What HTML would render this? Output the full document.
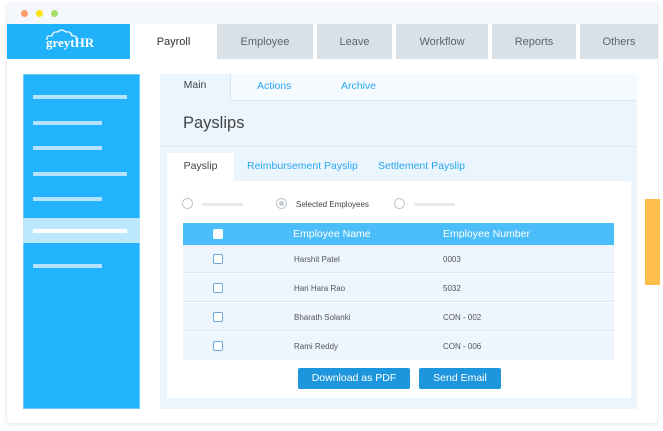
<!DOCTYPE html>
<html><head><style>
*{margin:0;padding:0;box-sizing:border-box}
body{width:663px;height:431px;background:#fff;position:relative;overflow:hidden;font-family:"Liberation Sans",sans-serif}
.a{position:absolute}
.win{left:7px;top:3px;width:651px;height:420px;background:#fff;border-radius:4px;box-shadow:0 1px 4px rgba(0,0,0,.12)}
.tb{left:7px;top:3px;width:651px;height:21px;background:#f4f8fd;border-radius:4px 4px 0 0}
.dot{width:7px;height:7px;border-radius:50%;top:10px}
.tab{top:24px;height:35px;background:#d9e1e7;color:#59646c;font-size:11px;line-height:37px;text-align:center}
.sl{height:4px;background:#b5e2fd;left:33px}
.row{left:183px;width:431px;height:28px;background:#edf6fe;border-bottom:1px solid #d8e6f1;font-size:8px;color:#555}
.row span{top:10px}
.cb{width:10px;height:10px;border:1.3px solid #6fa8d8;border-radius:2px;background:#fff;left:30px;top:9px}
.btn{top:368px;height:21px;background:#1e96dd;color:#fff;font-size:10.5px;line-height:21px;text-align:center;border-radius:2px}
.rad{width:11px;height:11px;border:1px solid #bcc6cf;border-radius:50%;background:#fff;top:198px}
</style></head><body>
<div class="a win"></div>
<div class="a tb"></div>
<div class="a dot" style="left:21px;background:#fd9a6a"></div>
<div class="a dot" style="left:36px;background:#fde216"></div>
<div class="a dot" style="left:51px;background:#a6df6a"></div>
<div class="a" style="left:7px;top:24px;width:123px;height:35px;background:#1fb2fb"></div>
<div class="a" style="left:46px;top:35px;color:#fff;font-family:'Liberation Serif',serif;font-weight:bold;font-size:13px">greytHR</div>
<svg class="a" style="left:44px;top:29px" width="40" height="12"><path d="M3 11 Q2 6 8 7 Q9 2 14 3 Q17 -1 22 3 Q27 2 28 7 Q33 6 33 11" fill="none" stroke="#fff" stroke-width="1.2"/></svg>
<div class="a tab" style="left:130px;width:87px;background:#fff;color:#333">Payroll</div>
<div class="a tab" style="left:217px;width:96px">Employee</div>
<div class="a tab" style="left:317px;width:75px">Leave</div>
<div class="a tab" style="left:396px;width:92px">Workflow</div>
<div class="a tab" style="left:492px;width:84px">Reports</div>
<div class="a tab" style="left:580px;width:78px">Others</div>
<div class="a" style="left:23px;top:74px;width:117px;height:335px;background:#22b3fc;border:1px solid #6dcdfd"></div>
<div class="a sl" style="top:95px;width:94px"></div>
<div class="a sl" style="top:121px;width:69px"></div>
<div class="a sl" style="top:146px;width:69px"></div>
<div class="a sl" style="top:172px;width:94px"></div>
<div class="a sl" style="top:197px;width:69px"></div>
<div class="a" style="left:23px;top:218px;width:117px;height:25px;background:#bde7fd"></div>
<div class="a sl" style="top:229px;width:94px;background:#fff"></div>
<div class="a sl" style="top:264px;width:69px"></div>
<div class="a" style="left:160px;top:74px;width:477px;height:335px;background:#eaf5fe;border-radius:2px"></div>
<div class="a" style="left:160px;top:74px;width:477px;height:27px;background:#f5faff;border-bottom:1px solid #dbe6ef"></div>
<div class="a" style="left:160px;top:74px;width:71px;height:28px;background:#eaf5fe;border-right:1px solid #dbe6ef;font-size:10.5px;color:#444;text-align:center;line-height:23px">Main</div>
<div class="a" style="left:257px;top:80px;font-size:10.5px;color:#2aa6f2">Actions</div>
<div class="a" style="left:341px;top:80px;font-size:10.5px;color:#2aa6f2">Archive</div>
<div class="a" style="left:183px;top:114px;font-size:16.5px;color:#444">Payslips</div>
<div class="a" style="left:160px;top:146px;width:477px;height:1px;background:#dbe6ef"></div>
<div class="a" style="left:167px;top:153px;width:67px;height:29px;background:#fff;border-radius:2px 2px 0 0;font-size:10.5px;color:#444;text-align:center;line-height:27px">Payslip</div>
<div class="a" style="left:247px;top:160px;font-size:10.5px;color:#2aa6f2">Reimbursement Payslip</div>
<div class="a" style="left:378px;top:160px;font-size:10.5px;color:#2aa6f2">Settlement Payslip</div>
<div class="a" style="left:167px;top:181px;width:464px;height:217px;background:#fff"></div>
<div class="a rad" style="left:182px"></div>
<div class="a" style="left:202px;top:203px;width:41px;height:3px;background:#e5eaee"></div>
<div class="a rad" style="left:276px"></div>
<div class="a" style="left:279px;top:201px;width:5px;height:5px;border-radius:50%;background:#c5ccd2"></div>
<div class="a" style="left:296px;top:200px;font-size:8px;color:#444">Selected Employees</div>
<div class="a rad" style="left:394px"></div>
<div class="a" style="left:414px;top:203px;width:41px;height:3px;background:#e5eaee"></div>
<div class="a" style="left:183px;top:223px;width:431px;height:22px;background:#4bbefa;color:#fff;font-size:10.5px;line-height:22px">
<div class="a" style="left:30px;top:6px;width:10px;height:10px;background:#fff;border-radius:2px"></div>
<span class="a" style="left:110px;top:0">Employee Name</span><span class="a" style="left:260px;top:0">Employee Number</span></div>
<div class="a row" style="top:245px"><div class="a cb"></div><span class="a" style="left:111px">Harshit Patel</span><span class="a" style="left:260px">0003</span></div>
<div class="a row" style="top:274px"><div class="a cb"></div><span class="a" style="left:111px">Hari Hara Rao</span><span class="a" style="left:260px">5032</span></div>
<div class="a row" style="top:303px"><div class="a cb"></div><span class="a" style="left:111px">Bharath Solanki</span><span class="a" style="left:260px">CON - 002</span></div>
<div class="a row" style="top:332px;border-bottom:none"><div class="a cb"></div><span class="a" style="left:111px">Rami Reddy</span><span class="a" style="left:260px">CON - 006</span></div>
<div class="a btn" style="left:298px;width:112px">Download as PDF</div>
<div class="a btn" style="left:419px;width:82px">Send Email</div>
<div class="a" style="left:645px;top:199px;width:15px;height:86px;background:#ffbe4a"></div>
</body></html>
